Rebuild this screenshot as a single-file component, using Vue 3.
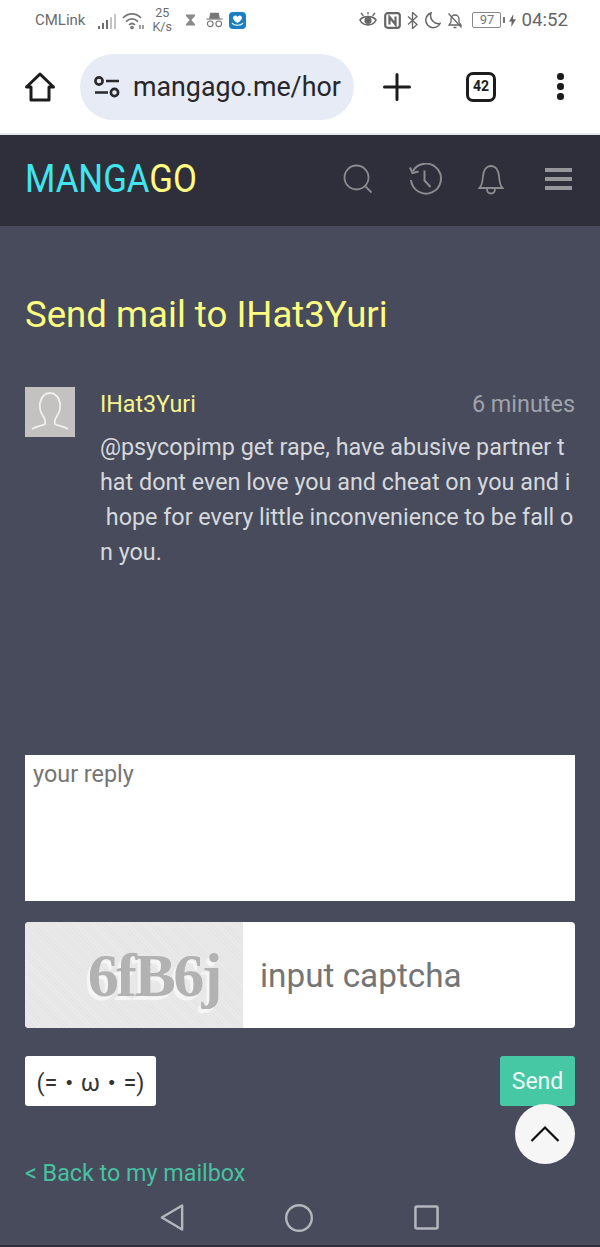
<template>
  <div class="screen">
    <div class="status-bar">
      <div class="status-left">
        <span class="carrier">CMLink</span>
        <svg class="ic" width="19" height="15" viewBox="0 0 19 15">
          <g fill="#6f6f6f"><rect x="0" y="12" width="2" height="3"/><rect x="4" y="9" width="2" height="6"/><rect x="8" y="6" width="2" height="9"/></g>
          <g fill="#c4c4c4"><rect x="12" y="3" width="2" height="12"/><rect x="16" y="0" width="2" height="15"/></g>
        </svg>
        <svg class="wifi" width="22" height="18" viewBox="0 0 22 18" fill="none" stroke="#777" stroke-width="1.7">
          <path d="M1 6 C6 0.5 14 0.5 19 6"/>
          <path d="M4 9.5 C8 6 12 6 16 9.5"/>
          <path d="M7 13 C9 11 11 11 13 13"/>
          <circle cx="10" cy="15.5" r="1" fill="#777"/>
          <path d="M18 13v4M21 13v4" stroke-width="1.4"/>
        </svg>
        <span class="speed">25<br>K/s</span>
        <svg class="hour" width="11" height="14" viewBox="0 0 12 14"><path d="M1 1h10v1.500L7 7l4 4.500V13H1v-1.500L5 7 1 2.500z" fill="#8a8a8a"/></svg>
        <svg class="spy" width="17" height="16" viewBox="0 0 18 16" fill="none" stroke="#777" stroke-width="1.2">
          <path d="M4 6l1-5h8l1 5z" fill="#777"/>
          <path d="M0.5 7h17"/>
          <circle cx="4.5" cy="12" r="3"/>
          <circle cx="13.5" cy="12" r="3"/>
        </svg>
        <svg width="17" height="17" viewBox="0 0 17 17">
          <rect width="17" height="17" rx="4" fill="#1a7fc0"/>
          <path d="M8.500 11 C4 8 3.500 6 4.500 4.500 C6 3 7.500 3.600 8.500 5 C9.500 3.600 11 3 12.500 4.500 C13.500 6 13 8 8.500 11z" fill="#fff"/>
          <path d="M3 11c2 3 9 3 11 0" fill="none" stroke="#fff" stroke-width="1.2"/>
        </svg>
      </div>
      <div class="status-right">
        <svg width="20" height="16" viewBox="0 0 20 16" fill="none" stroke="#666" stroke-width="1.6">
          <path d="M2 8c3-4.500 13-4.500 16 0-3 6.500-13 6.500-16 0z"/>
          <circle cx="10" cy="8.500" r="2.800" fill="#666"/>
          <path d="M3 1l2.500 3M17 1l-2.500 3M10 0v2.500" stroke-width="1.300"/>
        </svg>
        <svg width="17" height="17" viewBox="0 0 17 17" fill="none" stroke="#666" stroke-width="2.200">
          <rect x="1.200" y="1.200" width="14.600" height="14.600" rx="2.500"/>
          <path d="M5.500 12.500V5l6 7.500V4.500"/>
        </svg>
        <svg width="11" height="17" viewBox="0 0 11 17" fill="none" stroke="#666" stroke-width="1.300"><path d="M1 4.500l9 8-4.500 4V.5l4.500 4-9 8"/></svg>
        <svg width="17" height="17" viewBox="0 0 17 17" fill="none" stroke="#666" stroke-width="1.500"><path d="M7 1a7.500 7.500 0 1 0 9 10.500A8 8 0 0 1 7 1z"/></svg>
        <svg class="mute" width="16" height="17" viewBox="0 0 16 17" fill="none" stroke="#666" stroke-width="1.300">
          <path d="M2 13h12l-2-3V7a4 4 0 0 0-8 0v3z"/>
          <path d="M6.500 15.500h3M1.500 1.500l13 14"/>
        </svg>
        <span class="battery">97</span>
        <span class="batt-tip"></span>
        <svg class="bolt" width="7" height="15" viewBox="0 0 8 15"><path d="M5 0L0 8.500h3L2.500 15 8 6H4.500z" fill="#666"/></svg>
        <span class="clock">04:52</span>
      </div>
    </div>

    <div class="toolbar">
      <svg width="32" height="32" viewBox="0 0 32 32" fill="none" stroke="#1c1c1c" stroke-width="3" stroke-linejoin="round">
        <path d="M16 3L2.500 16H7v13h18V16h4.500z"/>
      </svg>
      <div class="urlbar">
        <svg width="26" height="24" viewBox="0 0 26 24" fill="none" stroke="#2a2a2e" stroke-width="2.600">
          <circle cx="5" cy="6" r="3.600"/>
          <path d="M12 6h13M1 17.500h13"/>
          <circle cx="20.500" cy="17.500" r="3.600"/>
        </svg>
        <span class="url">mangago.me/hor</span>
      </div>
      <svg class="plus" width="28" height="28" viewBox="0 0 28 28" stroke="#1c1c1c" stroke-width="3" stroke-linecap="round"><path d="M14 1.500v25M1.500 14h25"/></svg>
      <div class="tabs">42</div>
      <div class="dots"><i></i><i></i><i></i></div>
    </div>

    <header class="site-head">
      <div class="logo"><span class="cy">MANGA</span><span class="ye">GO</span></div>
      <div class="head-icons">
        <svg width="30" height="30" viewBox="0 0 30 30" fill="none" stroke="#8b8b90" stroke-width="1.800">
          <circle cx="13.500" cy="13.500" r="12"/>
          <path d="M22.500 22.500l6 6"/>
        </svg>
        <svg width="33" height="33" viewBox="0 0 33 33" fill="none" stroke="#8b8b90" stroke-width="2">
          <path d="M4 8A15 15 0 1 1 2 17"/>
          <path d="M1 4.500L3.500 10l6-1.500"/>
          <path d="M15.500 7.500v10l6 6.500"/>
        </svg>
        <svg width="26" height="32" viewBox="0 0 26 32" fill="none" stroke="#8b8b90" stroke-width="1.800">
          <path d="M1.500 25c3-3 3-7 3.500-12 .5-5 3-10 8-10s7.500 5 8 10c.5 5 .5 9 3.500 12z"/>
          <path d="M9 26c0 6 8 6 8 0"/>
        </svg>
        <div class="burger"><i></i><i></i><i></i></div>
      </div>
    </header>

    <main class="page">
      <h1 class="title">Send mail to IHat3Yuri</h1>

      <div class="message">
        <div class="avatar">
          <svg width="50" height="50" viewBox="0 0 50 50" fill="none" stroke="#f1f0ee" stroke-width="1.800">
            <path d="M7 42c5-3 10-3 13-5 1-3 0-5-2-8-2-3-4-7-3-13 1-6 5-10 10-10s9 4 10 10c1 6-1 10-3 13-2 3-3 5-2 8 3 2 8 2 13 5"/>
          </svg>
        </div>
        <div class="msg-body">
          <div class="msg-top">
            <span class="sender">IHat3Yuri</span>
            <span class="when">6 minutes</span>
          </div>
          <p class="msg-text">@psycopimp get rape, have abusive partner t<br>hat dont even love you and cheat on you and i<br>&nbsp;hope for every little inconvenience to be fall o<br>n you.</p>
        </div>
      </div>

      <textarea class="reply" placeholder="your reply"></textarea>

      <div class="captcha-row">
        <div class="captcha"><span class="captcha-txt">6fB6j</span></div>
        <span class="captcha-input">input captcha</span>
      </div>

      <div class="actions">
        <button class="emoji" type="button">(=・ω・=)</button>
        <button class="send" type="button">Send</button>
      </div>

      <a class="back">&lt; Back to my mailbox</a>
    </main>

    <button class="to-top" type="button">
      <svg width="30" height="18" viewBox="0 0 30 18" fill="none" stroke="#111" stroke-width="2.200"><path d="M1.500 16L15 2.500 28.500 16"/></svg>
    </button>

    <nav class="android-nav">
      <svg width="24" height="29" viewBox="0 0 26 30" fill="none" stroke="#b4b6bd" stroke-width="2.600" stroke-linejoin="round"><path d="M24 2v26L2 15z"/></svg>
      <svg width="28" height="28" viewBox="0 0 28 28" fill="none" stroke="#b4b6bd" stroke-width="2.400"><circle cx="14" cy="14" r="12.800"/></svg>
      <svg width="25" height="25" viewBox="0 0 26 26" fill="none" stroke="#b4b6bd" stroke-width="2.600"><rect x="1.500" y="1.500" width="23" height="23" rx="1.500"/></svg>
    </nav>
  </div>
</template>

<script setup>
</script>

<style>
html, body {
  margin: 0;
  background: #474b5b;
}
</style>

<style scoped>
.screen {
  position: relative;
  width: 600px;
  height: 1247px;
  overflow: hidden;
  background: #474b5b;
  font-family: Roboto, "Liberation Sans", sans-serif;
}
.screen::after {
  content: "";
  position: absolute;
  left: 0;
  right: 0;
  bottom: 0;
  height: 2px;
  background: #2f2f3b;
}

.status-bar {
  height: 40px;
  background: #fff;
  display: flex;
  justify-content: space-between;
  padding: 0 32px 0 35px;
  color: #666;
}
.status-left, .status-right {
  display: flex;
  align-items: center;
  height: 40px;
}
.carrier { font-size: 15px; margin-right: 13px; color: #6c6c6c; }
.ic { margin-right: 5px; margin-top: 2px; }
.wifi { margin-right: 8px; margin-top: 1px; }
.speed {
  font-size: 12.500px;
  line-height: 14px;
  text-align: center;
  margin-right: 13px;
  color: #6c6c6c;
}
.hour { margin-right: 10px; }
.spy { margin-right: 6px; }
.status-right svg { margin-right: 6px; }
.status-right svg.mute { margin-right: 9px; }
.status-right svg.bolt { margin-right: 5px; }
.battery {
  width: 27px;
  height: 14px;
  border: 1px solid #888;
  border-radius: 2px;
  font-size: 13px;
  line-height: 14px;
  text-align: center;
  color: #777;
}
.batt-tip {
  width: 2px;
  height: 6px;
  background: #777;
  margin: 0 4px 0 2px;
}
.clock {
  font-size: 18.700px;
  color: #666;
}

.toolbar {
  height: 93px;
  background: #fff;
  border-bottom: 2px solid #e6e7ec;
  display: flex;
  align-items: center;
  padding: 0 0 0 24px;
}
.urlbar {
  width: 274px;
  height: 66px;
  margin-left: 24px;
  border-radius: 33px;
  background: #e6ebf5;
  display: flex;
  align-items: center;
  padding-left: 14px;
  box-sizing: border-box;
  overflow: hidden;
}
.url {
  margin-left: 13px;
  font-size: 26.800px;
  color: #27272b;
  white-space: nowrap;
}
.plus { margin-left: 29px; }
.tabs {
  width: 30px;
  height: 30px;
  margin-left: 55px;
  border: 3.500px solid #1c1c1c;
  border-radius: 7px;
  box-sizing: border-box;
  font-size: 14px;
  font-weight: 700;
  line-height: 23px;
  text-align: center;
  color: #1c1c1c;
}
.dots {
  margin-left: 61px;
  display: flex;
  flex-direction: column;
  gap: 3.500px;
}
.dots i {
  display: block;
  width: 6.500px;
  height: 6.500px;
  border-radius: 50%;
  background: #1c1c1c;
}

.site-head {
  height: 91px;
  background: #2f2f3b;
  display: flex;
  justify-content: space-between;
  align-items: center;
  padding: 0 28px 3px 25px;
  box-sizing: border-box;
}
.logo {
  font-size: 38px;
  line-height: 1;
  transform: scaleX(0.915);
  transform-origin: left center;
  white-space: nowrap;
}
.cy { color: #3fe6ee; }
.ye { color: #fdfd80; }
.head-icons {
  display: flex;
  align-items: center;
  gap: 36px;
}
.burger {
  margin-left: 5px;
  width: 27px;
  display: flex;
  flex-direction: column;
  gap: 5px;
}
.burger i {
  display: block;
  height: 4px;
  background: #97979b;
}

.page {
  padding: 0 25px;
}
.title {
  margin: 67px 0 0;
  font-size: 36.600px;
  font-weight: 400;
  line-height: 44px;
  color: #fdfd80;
}

.message {
  display: flex;
  margin-top: 50px;
  height: 368px;
}
.avatar {
  width: 50px;
  height: 50px;
  background: #c3c2c0;
  flex: none;
}
.msg-body {
  margin-left: 25px;
  flex: 1;
  min-width: 0;
}
.msg-top {
  display: flex;
  justify-content: space-between;
  align-items: center;
  height: 34px;
}
.sender {
  font-size: 23.200px;
  color: #f5f58c;
}
.when {
  font-size: 23.400px;
  color: #a0a3ac;
}
.msg-text {
  margin: 0;
  padding-top: 9px;
  font-size: 23.350px;
  line-height: 35px;
  color: #d6d8dc;
  white-space: nowrap;
}

.reply {
  display: block;
  width: 550px;
  height: 146px;
  padding: 5px 8px;
  border: none;
  border-radius: 0;
  background: #fff;
  box-sizing: border-box;
  font-family: inherit;
  font-size: 23.400px;
  resize: none;
  outline: none;
}
.reply::placeholder { color: #757575; opacity: 1; }

.captcha-row {
  margin-top: 21px;
  height: 106px;
  display: flex;
  align-items: center;
  background: #fff;
  border-radius: 4px;
  overflow: hidden;
}
.captcha {
  width: 218px;
  height: 106px;
  flex: none;
  background-color: #e6e6e6;
  background-image: repeating-linear-gradient(45deg, rgba(255,255,255,.18) 0 1px, transparent 1px 3px);
  display: flex;
  align-items: center;
  justify-content: flex-end;
  padding-right: 23px;
  box-sizing: border-box;
}
.captcha-txt {
  font-family: "Liberation Serif", serif;
  font-size: 62px;
  font-weight: 700;
  letter-spacing: -2.500px;
  color: #b2b2b2;
  text-shadow: -3px 4px 1px #f6f6f6;
  line-height: 1;
}
.captcha-input {
  margin-left: 17px;
  font-size: 33.300px;
  color: #757575;
}

.actions {
  margin-top: 28px;
  display: flex;
  justify-content: space-between;
}
.emoji {
  width: 131px;
  height: 50px;
  padding: 0;
  border: none;
  border-radius: 3px;
  background: #fff;
  font-family: Roboto, "Noto Sans CJK JP", sans-serif;
  font-size: 23.400px;
  color: #333;
  white-space: nowrap;
}
.send {
  width: 75px;
  height: 50px;
  padding: 0;
  border: none;
  border-radius: 3px;
  background: #46c8a5;
  font-family: inherit;
  font-size: 23px;
  color: #eefaf6;
}

.back {
  display: block;
  margin-top: 50px;
  font-size: 23.300px;
  line-height: 34px;
  color: #46c2a2;
}

.to-top {
  position: absolute;
  left: 515px;
  top: 1104px;
  width: 60px;
  height: 60px;
  padding: 0;
  border: none;
  border-radius: 50%;
  background: #f6f6f6;
  display: flex;
  align-items: center;
  justify-content: center;
}

.android-nav {
  position: absolute;
  left: 160px;
  top: 1203px;
  width: 279px;
  display: flex;
  align-items: center;
  justify-content: space-between;
}
</style>
